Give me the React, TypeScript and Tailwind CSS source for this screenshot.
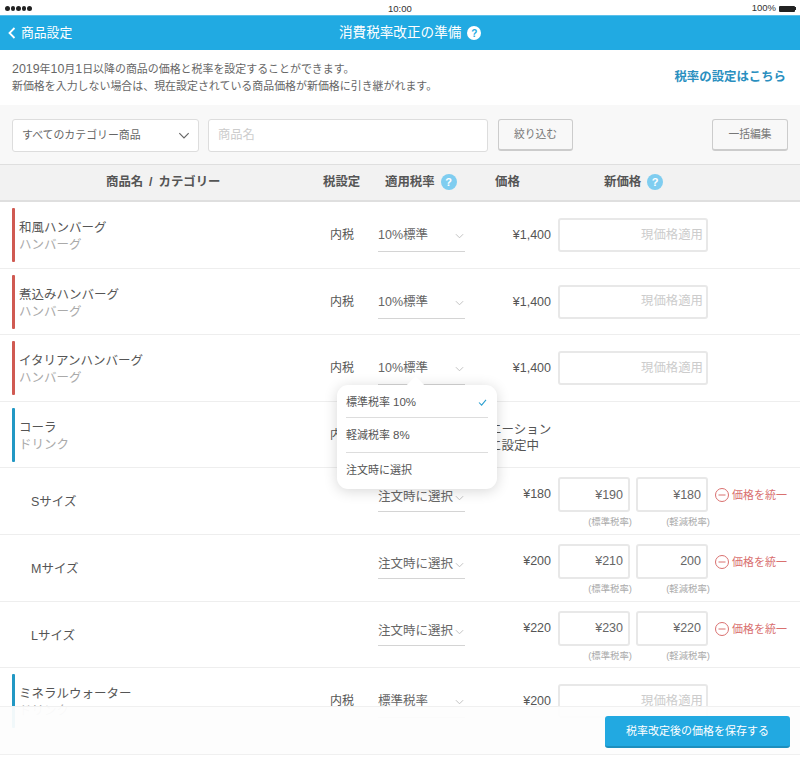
import React from "react";

const FONT = "font-['Liberation_Sans','Noto_Sans_CJK_JP',sans-serif]";

function Chevron({ className }: { className?: string }) {
  return (
    <svg viewBox="0 0 10 6" className={className} fill="none" stroke="currentColor" strokeWidth="1">
      <path d="M1 1l4 4 4-4" />
    </svg>
  );
}

function Help({ className, mark }: { className: string; mark: string }) {
  return (
    <span className={`flex items-center justify-center rounded-full font-bold ${className} ${mark}`}>?</span>
  );
}

function TaxSelect({ label, box = "mt-[25px] h-[25px]" }: { label: string; box?: string }) {
  return (
    <div className={`w-[87px] shrink-0 ${box} border-b border-[#d4d4d4] flex items-start justify-between text-[12.5px] leading-[17px] text-[#666]`}>
      <span className="whitespace-nowrap">{label}</span>
      <Chevron className="w-[9px] h-[6px] mt-[6px] mr-[1px] shrink-0 text-[#bbb]" />
    </div>
  );
}

function ProductRow({
  name,
  cat,
  bar,
  select,
  children,
}: {
  name: string;
  cat: string;
  bar: string;
  select?: string;
  children?: React.ReactNode;
}) {
  return (
    <div className="h-[66.6px] shrink-0 border-b border-[#eee] flex items-start box-border">
      <div className={`w-[3px] h-[54px] mt-[6px] ml-[12px] rounded-[1px] shrink-0 ${bar}`} />
      <div className="w-[315px] pl-[4px] mt-[17px] shrink-0">
        <div className="text-[12.5px] leading-[18px] text-[#555]">{name}</div>
        <div className="text-[12.5px] leading-[17px] text-[#aaa]">{cat}</div>
      </div>
      <div className="w-[48px] shrink-0 mt-[25px] text-[12px] leading-[17px] text-[#555]">内税</div>
      {select ? <TaxSelect label={select} /> : null}
      {children}
    </div>
  );
}

function PriceCell({ price }: { price: string }) {
  return (
    <>
      <div className="w-[86px] shrink-0 mt-[25px] text-right text-[12.5px] leading-[17px] text-[#555]">{price}</div>
      <div className="ml-[7px] w-[150px] h-[34px] mt-[16px] shrink-0 border-2 border-[#e8e8e8] rounded-[3px] bg-white flex items-center justify-end pr-[3px] text-[12.4px] text-[#ccc]">
        現価格適用
      </div>
    </>
  );
}

function PriceBox({ value, note }: { value: string; note: string }) {
  return (
    <div className="w-[72px] shrink-0 flex flex-col items-end">
      <div className="w-full h-[35px] border-2 border-[#e8e8e8] rounded-[3px] bg-white flex items-center justify-end pr-[5px] text-[12.5px] text-[#666]">
        {value}
      </div>
      <div className="text-[9.4px] leading-[12px] mt-[4px] -mr-[2px] text-[#aaa] whitespace-nowrap">{note}</div>
    </div>
  );
}

function SizeRow({ name, price, a, b }: { name: string; price: string; a: string; b: string }) {
  return (
    <div className="h-[66.6px] shrink-0 border-b border-[#eee] flex items-start box-border">
      <div className="w-[330px] pl-[31px] mt-[25px] shrink-0 text-[12.5px] leading-[18px] text-[#555]">{name}</div>
      <div className="ml-[48px] shrink-0">
        <TaxSelect label="注文時に選択" box="mt-[21px] h-[23px]" />
      </div>
      <div className="w-[86px] shrink-0 mt-[18px] text-right text-[12.5px] leading-[17px] text-[#555]">{price}</div>
      <div className="ml-[7px] mt-[9px] flex gap-[6px] shrink-0">
        <PriceBox value={a} note="(標準税率)" />
        <PriceBox value={b} note="(軽減税率)" />
      </div>
      <div className="ml-[7px] mt-[20px] flex items-center gap-[3px] shrink-0 text-[#d9706f]">
        <svg viewBox="0 0 14 14" className="w-[14px] h-[14px]" fill="none" stroke="currentColor" strokeWidth="1">
          <circle cx="7" cy="7" r="6.5" />
          <path d="M3.5 7h7" />
        </svg>
        <span className="text-[11px] leading-[14px] whitespace-nowrap">価格を統一</span>
      </div>
    </div>
  );
}

export default function App() {
  const red = "bg-[#d05a52]";
  const blue = "bg-[#2298c4]";
  const num = "text-[12.4px]";
  return (
    <div className={`${FONT} relative w-[800px] h-[759px] overflow-hidden bg-white`}>
      {/* status bar */}
      <div className="h-[15px] flex items-center justify-between pl-[5px] pr-[4px] pt-[2px] text-[9.5px] text-[#333] bg-white relative">
        <div className="flex gap-[1px]">
          {[0, 1, 2, 3, 4].map((i) => (
            <span key={i} className="w-[4.5px] h-[4.5px] rounded-full bg-[#222]" />
          ))}
        </div>
        <span className="absolute left-[388px] top-[2px] leading-[14px]">10:00</span>
        <div className="flex items-center gap-[3px]">
          <span>100%</span>
          <span className="w-[16px] h-[6px] bg-[#222] rounded-[1px]" />
          <span className="w-[1px] h-[3px] bg-[#222] -ml-[3px]" />
        </div>
      </div>

      {/* nav */}
      <div className="h-[35px] bg-[#21aae2] border-t border-[#5cc0ea] relative flex items-center text-white">
        <svg viewBox="0 0 8 12" className="w-[8px] h-[12px] ml-[8px]" fill="none" stroke="white" strokeWidth="1.8">
          <path d="M6.5 1L1.5 6l5 5" />
        </svg>
        <span className="ml-[5px] text-[12.8px]">商品設定</span>
        <div className="absolute left-[339px] top-0 h-full flex items-center gap-[6px]">
          <span className="text-[13.6px] whitespace-nowrap">消費税率改正の準備</span>
          <Help className="w-[14px] h-[14px] text-[10px]" mark="bg-white text-[#21aae2]" />
        </div>
      </div>

      {/* notice */}
      <div className="h-[55px] flex items-center justify-between pl-[12px] pr-[14px]">
        <div className="text-[10.95px] leading-[17px] text-[#666] whitespace-nowrap">
          <div>
            <span className={num}>2019</span>年<span className={num}>10</span>月<span className={num}>1</span>日以降の商品の価格と税率を設定することができます。
          </div>
          <div>新価格を入力しない場合は、現在設定されている商品価格が新価格に引き継がれます。</div>
        </div>
        <a className="text-[12.4px] font-bold text-[#2a8fbf] whitespace-nowrap">税率の設定はこちら</a>
      </div>

      {/* filters */}
      <div className="h-[59px] bg-[#f8f8f8] flex items-start pt-[14px] pl-[12px]">
        <div className="w-[187px] h-[33px] bg-white border border-[#ddd] rounded-[3px] flex items-center justify-between pl-[9px] pr-[8px] text-[10.9px] text-[#666]">
          <span>すべてのカテゴリー商品</span>
          <Chevron className="w-[12px] h-[7px] text-[#666]" />
        </div>
        <div className="ml-[9px] w-[280px] h-[33px] bg-white border border-[#ddd] rounded-[3px] flex items-center pl-[9px] text-[12.3px] text-[#ccc]">
          商品名
        </div>
        <div className="ml-[10px] w-[75px] h-[32px] bg-[#f8f8f8] border border-[#ccc] border-b-2 rounded-[3px] flex items-center justify-center text-[10.8px] text-[#777]">
          絞り込む
        </div>
        <div className="ml-[139px] w-[76px] h-[32px] bg-[#f8f8f8] border border-[#ccc] border-b-2 rounded-[3px] flex items-center justify-center text-[10.8px] text-[#777]">
          一括編集
        </div>
      </div>

      {/* table header */}
      <div className="h-[38px] bg-[#f2f2f2] border-t border-b-2 border-[#dfdfdf] flex items-center text-[12.4px] font-bold text-[#555] whitespace-nowrap">
        <div className="w-[323px] pl-[106px] shrink-0 [word-spacing:2.5px]">商品名 / カテゴリー</div>
        <div className="w-[62px] shrink-0">税設定</div>
        <div className="w-[110px] shrink-0 flex items-center gap-[6px]">
          適用税率
          <Help className="w-[16px] h-[16px] text-[11px]" mark="bg-[#7fcdf0] text-white" />
        </div>
        <div className="w-[109px] shrink-0">価格</div>
        <div className="flex items-center gap-[6px]">
          新価格
          <Help className="w-[16px] h-[16px] text-[11px]" mark="bg-[#7fcdf0] text-white" />
        </div>
      </div>

      {/* rows */}
      <div className="flex flex-col">
        <ProductRow name="和風ハンバーグ" cat="ハンバーグ" bar={red} select="10%標準">
          <PriceCell price="¥1,400" />
        </ProductRow>
        <ProductRow name="煮込みハンバーグ" cat="ハンバーグ" bar={red} select="10%標準">
          <PriceCell price="¥1,400" />
        </ProductRow>
        <ProductRow name="イタリアンハンバーグ" cat="ハンバーグ" bar={red} select="10%標準">
          <PriceCell price="¥1,400" />
        </ProductRow>
        <ProductRow name="コーラ" cat="ドリンク" bar={blue}>
          <div className="ml-[86px] mt-[20px] text-[12.5px] leading-[16px] text-[#555] whitespace-nowrap">
            <div>バリエーション</div>
            <div>個別に設定中</div>
          </div>
        </ProductRow>
        <SizeRow name="Sサイズ" price="¥180" a="¥190" b="¥180" />
        <SizeRow name="Mサイズ" price="¥200" a="¥210" b="200" />
        <SizeRow name="Lサイズ" price="¥220" a="¥230" b="¥220" />
        <ProductRow name="ミネラルウォーター" cat="ドリンク" bar={blue} select="標準税率">
          <PriceCell price="¥200" />
        </ProductRow>
      </div>

      {/* tax rate popover */}
      <div className="absolute left-[337px] top-[385px] w-[160px] h-[104px] bg-white rounded-[11px] shadow-[0_2px_14px_rgba(0,0,0,0.16)] px-[9px] text-[11px] text-[#555]">
        <div className="absolute left-[72px] -top-[6px] w-[13px] h-[13px] rotate-45 bg-white" />
        <div className="relative h-[33px] pt-[3px] border-b border-[#ddd] flex items-center justify-between">
          <span>
            標準税率 <span className="text-[11.5px]">10%</span>
          </span>
          <svg viewBox="0 0 10 8" className="w-[9px] h-[7px] mr-[1px]" fill="none" stroke="#2a9fd0" strokeWidth="1.2">
            <path d="M1 4l3 3 5-6" />
          </svg>
        </div>
        <div className="h-[35px] pt-[2px] border-b border-[#ddd] flex items-center">
          <span>
            軽減税率 <span className="text-[11.5px]">8%</span>
          </span>
        </div>
        <div className="h-[35px] flex items-center">注文時に選択</div>
      </div>

      {/* save bar */}
      <div className="absolute left-0 right-0 bottom-[4px] h-[49px] bg-[#fdfdfd]/95 border-t border-[#f0f0f0] border-b flex items-start justify-end pr-[10px] pt-[9px]">
        <button className="w-[185px] h-[32px] bg-[#22a9e1] border-b-2 border-[#1d8fbe] rounded-[3px] text-white text-[11px]">
          税率改定後の価格を保存する
        </button>
      </div>
    </div>
  );
}
